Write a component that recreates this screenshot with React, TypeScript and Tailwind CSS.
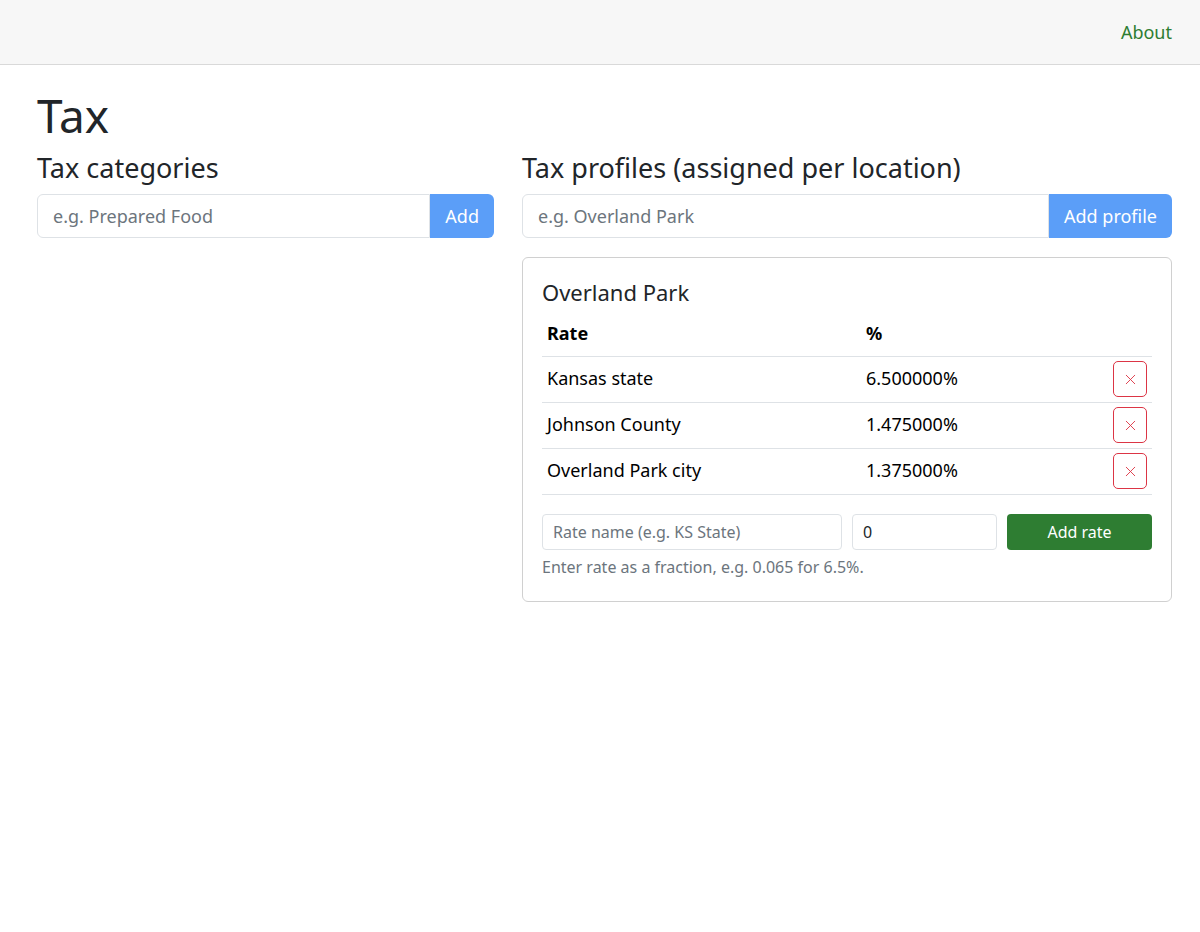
import { X } from "lucide-react";

const rates = [
  { name: "Kansas state", pct: "6.500000%" },
  { name: "Johnson County", pct: "1.475000%" },
  { name: "Overland Park city", pct: "1.375000%" },
];

export default function App() {
  return (
    <div className="min-h-screen bg-white text-[#212529] font-['Liberation_Sans',Arial,sans-serif]">
      {/* Navbar */}
      <nav className="h-[65px] bg-[#f7f7f7] border-b border-[#d9d9d9] flex items-center justify-end px-[28px]">
        <a href="#" className="text-[18px] text-[#2e7d32]">About</a>
      </nav>

      <main className="px-[37px] pt-[22px]">
        <h1 className="text-[46px] leading-[56px] mb-[8px]">Tax</h1>

        <div className="grid grid-cols-[457px_650px] gap-[28px]">
          {/* Categories */}
          <div>
            <h4 className="text-[27px] leading-[34px] mb-[9px]">Tax categories</h4>
            <div className="flex h-[44px]">
              <input
                placeholder="e.g. Prepared Food"
                className="flex-1 min-w-0 border border-[#dee2e6] rounded-l-[6px] px-[15px] text-[18px] placeholder-[#6c757d] outline-none"
              />
              <button className="bg-[#5b9ef8] text-white text-[18px] px-[15px] rounded-r-[6px]">Add</button>
            </div>
          </div>

          {/* Profiles */}
          <div>
            <h4 className="text-[27px] leading-[34px] mb-[9px]">Tax profiles (assigned per location)</h4>
            <div className="flex h-[44px]">
              <input
                placeholder="e.g. Overland Park"
                className="flex-1 min-w-0 border border-[#dee2e6] rounded-l-[6px] px-[15px] text-[18px] placeholder-[#6c757d] outline-none"
              />
              <button className="bg-[#5b9ef8] text-white text-[18px] px-[15px] rounded-r-[6px]">Add profile</button>
            </div>

            <div className="mt-[19px] border border-[#d0d0d0] rounded-[6px] px-[19px] pt-[20px] pb-[22px]">
              <h5 className="text-[22px] leading-[28px] mb-[14px]">Overland Park</h5>
              <table className="w-full text-[18px] text-black">
                <thead>
                  <tr className="border-b border-[#dee2e6] h-[36px]">
                    <th className="text-left font-bold px-[5px] align-top w-[319px]">Rate</th>
                    <th className="text-left font-bold px-[5px] align-top">%</th>
                    <th />
                  </tr>
                </thead>
                <tbody>
                  {rates.map((r) => (
                    <tr key={r.name} className="border-b border-[#dee2e6] h-[46px]">
                      <td className="px-[5px] align-top pt-[8px]">{r.name}</td>
                      <td className="px-[5px] align-top pt-[8px]">{r.pct}</td>
                      <td className="px-[5px] text-right">
                        <button className="inline-flex items-center justify-center w-[34px] h-[36px] border border-[#dc3545] rounded-[5px] text-[#dc3545]">
                          <X size={17} strokeWidth={1.3} />
                        </button>
                      </td>
                    </tr>
                  ))}
                </tbody>
              </table>

              <div className="flex gap-[10px] mt-[19px] h-[36px]">
                <input
                  placeholder="Rate name (e.g. KS State)"
                  className="w-[300px] border border-[#dee2e6] rounded-[4px] px-[10px] text-[16px] placeholder-[#6c757d] outline-none"
                />
                <input
                  defaultValue="0"
                  className="w-[145px] border border-[#dee2e6] rounded-[4px] px-[10px] text-[16px] outline-none"
                />
                <button className="flex-1 bg-[#2e7d32] text-white text-[16px] rounded-[4px]">Add rate</button>
              </div>
              <p className="text-[16px] text-[#6c757d] mt-[5px]">Enter rate as a fraction, e.g. 0.065 for 6.5%.</p>
            </div>
          </div>
        </div>
      </main>
    </div>
  );
}
